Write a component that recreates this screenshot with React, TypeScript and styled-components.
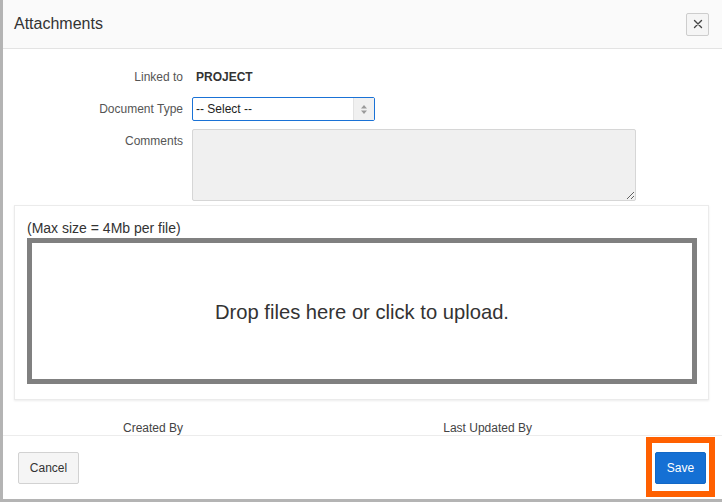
import React from "react";
import styled, { createGlobalStyle } from "styled-components";

const GlobalStyle = createGlobalStyle`
  html, body {
    margin: 0;
    padding: 0;
    width: 722px;
    height: 502px;
    overflow: hidden;
    font-family: "Liberation Sans", Arial, sans-serif;
    color: #333;
  }
  * {
    box-sizing: border-box;
  }
`;

const Backdrop = styled.div`
  width: 722px;
  height: 502px;
  background: #b4b4b4;
  padding: 0 0 3px 3px;
  display: flex;
`;

const Modal = styled.div`
  flex: 1;
  background: #fff;
  display: flex;
  flex-direction: column;
  overflow: hidden;
`;

const Header = styled.header`
  height: 49px;
  flex-shrink: 0;
  background: #fafafa;
  border-bottom: 1px solid #e3e3e3;
  display: flex;
  align-items: center;
  justify-content: space-between;
  padding: 0 13px 0 11px;
`;

const Title = styled.h2`
  margin: 0;
  font-size: 16px;
  font-weight: 400;
  color: #333;
`;

const CloseButton = styled.button`
  width: 23px;
  height: 23px;
  padding: 0;
  display: flex;
  align-items: center;
  justify-content: center;
  background: #f5f5f5;
  border: 1px solid #cdcdcd;
  border-radius: 2px;
  color: #444;
`;

const Body = styled.div`
  flex: 1;
  overflow: hidden;
  padding-top: 15px;
`;

interface IRowProps {
  gap: number;
}

const FormRow = styled.div<IRowProps>`
  display: flex;
  align-items: flex-start;
  min-height: 24px;
  margin-bottom: ${props => props.gap}px;
`;

interface ILabelProps {
  top: number;
}

const Label = styled.label<ILabelProps>`
  width: 180px;
  flex-shrink: 0;
  text-align: right;
  padding-top: ${props => props.top}px;
  margin-right: 9px;
  font-size: 12px;
  line-height: 14px;
  color: #555;
`;

const StaticValue = styled.div`
  padding: 6px 4px 0;
  font-size: 12px;
  line-height: 14px;
  font-weight: 700;
  color: #333;
`;

const SelectBox = styled.div`
  width: 183px;
  height: 24px;
  display: flex;
  border: 1px solid #1a72d6;
  border-radius: 2px;
  background: #fff;
`;

const SelectText = styled.div`
  flex: 1;
  padding: 0 3px;
  display: flex;
  align-items: center;
  font-size: 12px;
  color: #222;
`;

const SelectArrow = styled.div`
  width: 21px;
  background: #f0f0f0;
  border-left: 1px solid #e2e2e2;
  display: flex;
  align-items: center;
  justify-content: center;
`;

const Comments = styled.textarea`
  width: 444px;
  height: 72px;
  background: #f0f0f0;
  border: 1px solid #d6d6d6;
  border-radius: 2px;
  resize: vertical;
  font-family: inherit;
  outline: none;
`;

const UploadPanel = styled.div`
  margin: 0 13px 0 11px;
  height: 195px;
  border: 1px solid #ebebeb;
  box-shadow: 0 1px 2px rgba(0, 0, 0, 0.08);
  padding: 14px 11px 15px 12px;
  display: flex;
  flex-direction: column;
`;

const MaxSize = styled.div`
  font-size: 14px;
  line-height: 17px;
  color: #333;
  margin-bottom: 1px;
`;

const DropZone = styled.div`
  flex: 1;
  border: 5px solid #808080;
  display: flex;
  align-items: center;
  justify-content: center;
  padding-top: 2px;
  font-size: 20.2px;
  color: #333;
  cursor: pointer;
`;

const MetaRow = styled.div`
  display: flex;
  margin-top: 21px;
`;

interface IMetaProps {
  width: number;
}

const MetaLabel = styled.div<IMetaProps>`
  width: ${props => props.width}px;
  flex-shrink: 0;
  text-align: right;
  font-size: 12px;
  line-height: 14px;
  color: #444;
`;

const Footer = styled.footer`
  height: 64px;
  flex-shrink: 0;
  border-top: 1px solid #ececec;
  display: flex;
  align-items: center;
  justify-content: space-between;
  padding: 0 16px 0 15px;
`;

const CancelButton = styled.button`
  width: 61px;
  height: 32px;
  background: #f5f5f5;
  border: 1px solid #d2d2d2;
  border-radius: 2px;
  font-family: inherit;
  font-size: 12px;
  color: #333;
`;

const SaveButton = styled.button`
  position: relative;
  width: 51px;
  height: 32px;
  background: #1570d4;
  border: 1px solid #1268c6;
  border-radius: 2px;
  font-family: inherit;
  font-size: 12px;
  color: #fff;
  &::after {
    content: "";
    position: absolute;
    top: -16px;
    left: -10px;
    right: -10px;
    bottom: -14px;
    border: 6px solid #ff6000;
    pointer-events: none;
  }
`;

export default function App() {
  return (
    <>
      <GlobalStyle />
      <Backdrop>
        <Modal>
          <Header>
            <Title>Attachments</Title>
            <CloseButton aria-label="Close">
              <svg width="10" height="10" viewBox="0 0 10 10">
                <path
                  d="M1.5 1.5 L8.5 8.5 M8.5 1.5 L1.5 8.5"
                  stroke="#444"
                  strokeWidth="1.4"
                  strokeLinecap="round"
                />
              </svg>
            </CloseButton>
          </Header>
          <Body>
            <FormRow gap={9}>
              <Label top={6}>Linked to</Label>
              <StaticValue>PROJECT</StaticValue>
            </FormRow>
            <FormRow gap={8}>
              <Label top={5}>Document Type</Label>
              <SelectBox>
                <SelectText>-- Select --</SelectText>
                <SelectArrow>
                  <svg width="6" height="9" viewBox="0 0 6 9">
                    <path d="M3 0 L6 3.5 H0 Z M3 9 L6 5.5 H0 Z" fill="#9a9a9a" />
                  </svg>
                </SelectArrow>
              </SelectBox>
            </FormRow>
            <FormRow gap={4}>
              <Label top={5}>Comments</Label>
              <Comments readOnly />
            </FormRow>
            <UploadPanel>
              <MaxSize>(Max size = 4Mb per file)</MaxSize>
              <DropZone>Drop files here or click to upload.</DropZone>
            </UploadPanel>
            <MetaRow>
              <MetaLabel width={180}>Created By</MetaLabel>
              <MetaLabel width={349}>Last Updated By</MetaLabel>
            </MetaRow>
          </Body>
          <Footer>
            <CancelButton>Cancel</CancelButton>
            <SaveButton>Save</SaveButton>
          </Footer>
        </Modal>
      </Backdrop>
    </>
  );
}
